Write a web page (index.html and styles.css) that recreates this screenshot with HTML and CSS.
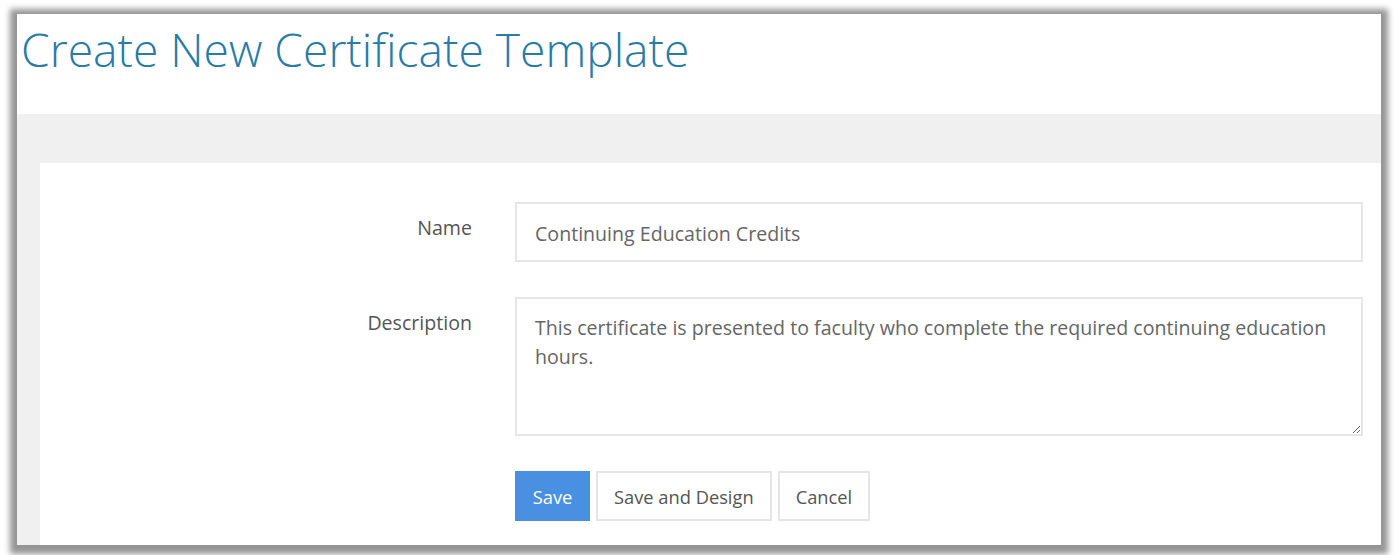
FILE: index.html
```html
<!DOCTYPE html>
<html>
<head>
<meta charset="utf-8">
<link rel="stylesheet" href="styles.css">
</head>
<body>
<div class="frame">
  <header class="page-header">
    <h1 class="title">Create New Certificate Template</h1>
  </header>
  <div class="content">
    <div class="card">
      <form class="form">
        <label class="label" for="name">Name</label>
        <div class="field"><input id="name" class="input" type="text" value="Continuing Education Credits"></div>
        <label class="label" for="desc">Description</label>
        <div class="field"><textarea id="desc" class="textarea">This certificate is presented to faculty who complete the required continuing education hours.</textarea></div>
        <div class="spacer"></div>
        <div class="actions">
          <button type="button" class="btn btn-primary">Save</button>
          <button type="button" class="btn">Save and Design</button>
          <button type="button" class="btn">Cancel</button>
        </div>
      </form>
    </div>
  </div>
</div>
</body>
</html>
```

FILE: styles.css
```css
* { box-sizing: border-box; }
html, body { margin: 0; padding: 0; background: #ffffff; }
body {
  width: 1397px;
  height: 555px;
  overflow: hidden;
  padding: 14px 16px 10px 17px;
  font-family: "Open Sans", "DejaVu Sans", sans-serif;
}
.frame {
  width: 1364px;
  height: 531px;
  background: #f0f0f0;
  box-shadow: 0 2px 6px 7px rgba(0,0,0,0.42);
  display: flex;
  flex-direction: column;
}
.page-header {
  background: #ffffff;
  height: 100px;
  padding: 0 0 0 4px;
}
.title {
  margin: 0;
  padding-top: 8px;
  font-weight: 300;
  font-size: 46.2px;
  line-height: 1.2;
  color: #2a7ba6;
  letter-spacing: 0;
}
.content {
  flex: 1;
  padding: 49px 0 0 23px;
  display: flex;
}
.card {
  flex: 1;
  background: #ffffff;
  padding: 39px 18px 0 0;
}
.form {
  display: grid;
  grid-template-columns: 432px 1fr;
  column-gap: 43px;
  row-gap: 35px;
}
.label {
  text-align: right;
  font-size: 19.6px;
  color: #555555;
  padding-top: 13px;
  line-height: 26px;
}
.input, .textarea {
  width: 100%;
  display: block;
  border: 2px solid #e6e6e6;
  font-family: "Open Sans", "DejaVu Sans", sans-serif;
  font-size: 19.6px;
  color: #666666;
  padding: 0 18px;
  outline: none;
  background: #fff;
}
.input { height: 60px; padding-top: 3px; }
.textarea {
  height: 139px;
  padding-top: 14px;
  line-height: 29px;
  resize: vertical;
}
.actions {
  display: flex;
  gap: 6px;
}
.btn {
  height: 50px;
  border: 2px solid #e6e6e6;
  background: #ffffff;
  color: #555555;
  font-family: "Open Sans", "DejaVu Sans", sans-serif;
  font-size: 18.3px;
  padding: 0 16px;
}
.btn-primary {
  background: #4a90e2;
  border-color: #4a90e2;
  color: #ffffff;
  width: 75px;
  padding: 0;
}
```
